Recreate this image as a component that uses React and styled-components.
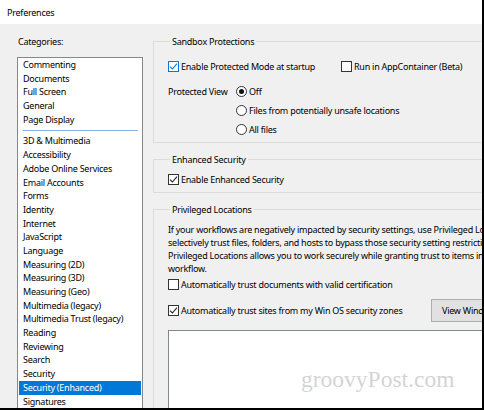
import styled, { createGlobalStyle } from "styled-components";

const GlobalStyle = createGlobalStyle`
  html, body { margin: 0; padding: 0; background: #fff; }
  body {
    font-family: "Noto Sans", "DejaVu Sans", sans-serif;
    font-size: 9px;
    letter-spacing: -0.25px;
    color: #000;
  }
`;

const categoriesTop = ["Commenting", "Documents", "Full Screen", "General", "Page Display"];
const categoriesBottom = [
    "3D & Multimedia", "Accessibility", "Adobe Online Services", "Email Accounts", "Forms",
    "Identity", "Internet", "JavaScript", "Language", "Measuring (2D)", "Measuring (3D)",
    "Measuring (Geo)", "Multimedia (legacy)", "Multimedia Trust (legacy)", "Reading",
    "Reviewing", "Search", "Security", "Security (Enhanced)", "Signatures",
];

const Check = ({ checked, focus }) => (
    <CheckBox $focus={focus}>
        {checked && (
            <svg width="9" height="9" viewBox="0 0 9 9">
                <path d="M1 4.6 L3.4 7 L8 1.6" fill="none" stroke={focus ? "#0078d7" : "#222"} strokeWidth="1.1" />
            </svg>
        )}
    </CheckBox>
);

const Radio = ({ checked }) => (
    <RadioCircle>{checked && <RadioDot />}</RadioCircle>
);

const App = () => {
    return (
        <>
            <GlobalStyle />
            <Window>
                <TitleBar>Preferences</TitleBar>
                <Body>
                    <Sidebar>
                        <CategoriesLabel>Categories:</CategoriesLabel>
                        <ListBox>
                            {categoriesTop.map((c) => <Item key={c}>{c}</Item>)}
                            <Separator />
                            {categoriesBottom.map((c) => (
                                <Item key={c} $selected={c === "Security (Enhanced)"}>{c}</Item>
                            ))}
                        </ListBox>
                    </Sidebar>
                    <Main>
                        <Group $pt="9px" $pb="3px">
                            <Legend>Sandbox Protections</Legend>
                            <Row>
                                <CheckLabel $width="173px"><Check checked focus />Enable Protected Mode at startup</CheckLabel>
                                <CheckLabel><Check />Run in AppContainer (Beta)</CheckLabel>
                            </Row>
                            <ViewGrid>
                                <FieldName>Protected View</FieldName>
                                <RadioList>
                                    <Row><CheckLabel><Radio checked />Off</CheckLabel></Row>
                                    <Row><CheckLabel><Radio />Files from potentially unsafe locations</CheckLabel></Row>
                                    <Row><CheckLabel><Radio />All files</CheckLabel></Row>
                                </RadioList>
                            </ViewGrid>
                        </Group>
                        <Group $pt="4px" $pb="3px">
                            <Legend>Enhanced Security</Legend>
                            <Row><CheckLabel><Check checked />Enable Enhanced Security</CheckLabel></Row>
                        </Group>
                        <Group $pt="7px" $pb="0">
                            <Legend>Privileged Locations</Legend>
                            <Paragraph>
                                If your workflows are negatively impacted by security settings, use Privileged Locations to<br />
                                selectively trust files, folders, and hosts to bypass those security setting restrictions.<br />
                                Privileged Locations allows you to work securely while granting trust to items in your<br />
                                workflow.
                            </Paragraph>
                            <Row><CheckLabel><Check />Automatically trust documents with valid certification</CheckLabel></Row>
                            <ButtonRow>
                                <CheckLabel $width="263px"><Check checked />Automatically trust sites from my Win OS security zones</CheckLabel>
                                <Button>View Windows Trusted Sites</Button>
                            </ButtonRow>
                            <TrustList>
                                <Watermark>groovyPost.com</Watermark>
                            </TrustList>
                        </Group>
                    </Main>
                </Body>
            </Window>
        </>
    );
};

const Window = styled.div`
  width: 484px;
  height: 410px;
  box-sizing: border-box;
  border-right: 2px solid #000;
  border-bottom: 2px solid #000;
  overflow: hidden;
  background: #f0f0f0;
  display: flex;
  flex-direction: column;
`;

const TitleBar = styled.div`
  height: 24px;
  flex: none;
  background: #fff;
  padding-left: 7px;
  display: flex;
  align-items: center;
`;

const Body = styled.div`
  flex: 1;
  display: flex;
  gap: 10px;
  padding: 11px 0 0 17px;
  min-height: 0;
`;

const Sidebar = styled.div`
  width: 126px;
  flex: none;
  display: flex;
  flex-direction: column;
`;

const CategoriesLabel = styled.div`
  height: 14px;
  line-height: 14px;
  padding-left: 1px;
  margin-bottom: 8px;
`;

const ListBox = styled.div`
  flex: 1;
  background: #fff;
  border: 1px solid #828790;
  border-bottom: none;
  padding: 0 1px;
`;

const Item = styled.div`
  height: 13.7px;
  line-height: 13.7px;
  padding-left: 4px;
  white-space: nowrap;
  background: ${(p) => (p.$selected ? "#0078d7" : "transparent")};
  color: ${(p) => (p.$selected ? "#fff" : "#000")};
`;

const Separator = styled.div`
  height: 1px;
  background: #7eb4ea;
  margin: 4px 3px 3px 4px;
`;

const Main = styled.div`
  width: 420px;
  flex: none;
  display: flex;
  flex-direction: column;
  gap: 10px;
`;

const Group = styled.fieldset`
  margin: 0;
  border: 1px solid #dcdcdc;
  padding: ${(p) => p.$pt} 0 ${(p) => p.$pb} 14px;
  min-width: 0;
  &:last-child { flex: 1; }
`;

const Legend = styled.legend`
  padding: 0 2px;
  margin-left: 2px;
  line-height: 13px;
`;

const Row = styled.div`
  height: 19px;
  display: flex;
  align-items: center;
`;

const ButtonRow = styled.div`
  height: 24px;
  margin-top: 4px;
  display: flex;
  align-items: center;
`;

const CheckLabel = styled.label`
  display: flex;
  align-items: center;
  gap: 2px;
  white-space: nowrap;
  width: ${(p) => p.$width || "auto"};
`;

const CheckBox = styled.span`
  width: 11px;
  height: 11px;
  box-sizing: border-box;
  border: 1px solid ${(p) => (p.$focus ? "#0078d7" : "#333")};
  background: #fff;
  display: flex;
  align-items: center;
  justify-content: center;
  flex: none;
`;

const RadioCircle = styled.span`
  width: 11px;
  height: 11px;
  box-sizing: border-box;
  border: 1px solid #333;
  border-radius: 50%;
  background: #fff;
  display: flex;
  align-items: center;
  justify-content: center;
  flex: none;
`;

const RadioDot = styled.span`
  width: 5px;
  height: 5px;
  border-radius: 50%;
  background: #111;
`;

const ViewGrid = styled.div`
  display: grid;
  grid-template-columns: 68px 1fr;
  margin-top: 6px;
`;

const FieldName = styled.div`
  height: 19px;
  line-height: 19px;
  white-space: nowrap;
`;

const RadioList = styled.div`
  display: flex;
  flex-direction: column;
`;

const Paragraph = styled.p`
  margin: 0;
  line-height: 13px;
  white-space: nowrap;
`;

const Button = styled.button`
  height: 23px;
  padding: 0 10px;
  font: inherit;
  letter-spacing: inherit;
  color: #000;
  background: #e1e1e1;
  border: 1px solid #adadad;
  white-space: nowrap;
`;

const TrustList = styled.div`
  margin-top: 8px;
  height: 120px;
  background: #fff;
  border: 1px solid #828790;
  position: relative;
`;

const Watermark = styled.span`
  position: absolute;
  left: 132px;
  top: 35px;
  font-family: "Liberation Serif", serif;
  font-size: 23.5px;
  letter-spacing: 0;
  color: #d4d4d4;
`;

export default App;
